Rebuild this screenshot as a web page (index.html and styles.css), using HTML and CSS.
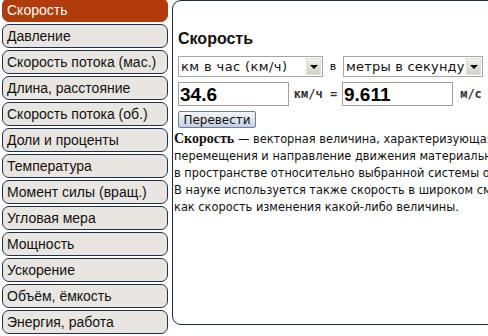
FILE: index.html
```html
<!DOCTYPE html>
<html lang="ru">
<head>
    <meta charset="UTF-8">
    <title>Конвертер величин</title>
    <link rel="stylesheet" href="styles.css">
</head>
<body>
    <div class="page">
        <ul class="menu">
            <li class="menu-item active">Скорость</li>
            <li class="menu-item">Давление</li>
            <li class="menu-item">Скорость потока (мас.)</li>
            <li class="menu-item">Длина, расстояние</li>
            <li class="menu-item">Скорость потока (об.)</li>
            <li class="menu-item">Доли и проценты</li>
            <li class="menu-item">Температура</li>
            <li class="menu-item">Момент силы (вращ.)</li>
            <li class="menu-item">Угловая мера</li>
            <li class="menu-item">Мощность</li>
            <li class="menu-item">Ускорение</li>
            <li class="menu-item">Объём, ёмкость</li>
            <li class="menu-item">Энергия, работа</li>
        </ul>

        <div class="panel">
            <h2 class="panel-title">Скорость</h2>

            <div class="row">
                <div class="select select-from">
                    <select><option>км в час (км/ч)</option></select>
                    <span class="arrow"></span>
                </div>
                <span class="sep">в</span>
                <div class="select select-to">
                    <select><option>метры в секунду</option></select>
                    <span class="arrow"></span>
                </div>
            </div>

            <div class="row">
                <input class="value" type="text" value="34.6">
                <span class="unit">км/ч =</span>
                <input class="value" type="text" value="9.611">
                <span class="unit unit-right">м/с</span>
            </div>

            <button class="convert-btn">Перевести</button>

            <p class="info">
                <b>Скорость</b> — векторная величина, характеризующая быстроту<br>
                перемещения и направление движения материальной точки<br>
                в пространстве относительно выбранной системы отсчёта.<br>
                В науке используется также скорость в широком смысле,<br>
                как скорость изменения какой-либо величины.
            </p>
        </div>
    </div>
</body>
</html>
```

FILE: styles.css
```css
body {
    margin: 0;
    background: #fff;
    font-family: "Liberation Sans", Arial, sans-serif;
    overflow: hidden;
}

.page {
    display: flex;
    align-items: flex-start;
}

.menu {
    list-style: none;
    margin: -2px 0 0 2px;
    padding: 0;
    width: 166px;
    flex-shrink: 0;
}

.menu-item {
    box-sizing: border-box;
    height: 24px;
    margin-bottom: 2px;
    padding: 3px 0 0 4px;
    font-size: 14px;
    color: #111;
    background: #e9e6e1;
    border: 1px solid #1e3150;
    border-radius: 7px;
    white-space: nowrap;
}

.menu-item.active {
    background: #b23b0c;
    border-color: #b23b0c;
    color: #fff;
}

.panel {
    box-sizing: border-box;
    margin-left: 4px;
    width: 600px;
    height: 325px;
    flex-shrink: 0;
    padding: 29px 0 0 5px;
    border: 1.5px solid #1c2a44;
    border-radius: 9px;
}

.panel-title {
    margin: 0 0 8px 0;
    font-size: 16px;
    font-weight: bold;
    color: #111;
}

.row {
    display: flex;
    align-items: center;
    margin-bottom: 5px;
}

.select {
    box-sizing: border-box;
    display: flex;
    align-items: center;
    height: 21px;
    border: 1px solid #a5a5a5;
    background: #fff;
}

.select-from {
    width: 145px;
}

.select-to {
    width: 140px;
}

.select select {
    flex: 1;
    min-width: 0;
    appearance: none;
    border: none;
    background: transparent;
    padding: 0 0 0 2px;
    font-family: "DejaVu Sans", Verdana, sans-serif;
    font-size: 13px;
    letter-spacing: 0.4px;
    color: #111;
}

.select-to select {
    letter-spacing: 0.2px;
}

.arrow {
    position: relative;
    width: 15px;
    height: 17px;
    margin-right: 1px;
    background: linear-gradient(#f2f1ee, #d3d0c8);
    border: 1px solid #e0ded8;
    box-sizing: border-box;
}

.arrow::after {
    content: "";
    position: absolute;
    left: 3px;
    top: 6px;
    border-left: 4px solid transparent;
    border-right: 4px solid transparent;
    border-top: 4px solid #000;
}

.sep {
    width: 20px;
    text-align: center;
    font-family: "DejaVu Sans", Verdana, sans-serif;
    font-size: 11px;
}

.value {
    box-sizing: border-box;
    width: 111px;
    height: 24px;
    padding: 1px 1px 0;
    border: 1px solid #a0a0a0;
    font-family: "Liberation Sans", Arial, sans-serif;
    font-size: 19px;
    font-weight: bold;
    color: #000;
}

.unit {
    width: 53px;
    text-align: center;
    font-family: "DejaVu Sans Mono", monospace;
    font-size: 12px;
    font-weight: bold;
    color: #333;
}

.unit-right {
    width: 36px;
}

.convert-btn {
    display: block;
    width: 78px;
    height: 17px;
    padding: 0;
    margin: 4px 0 0 0;
    font-family: "DejaVu Sans", Verdana, sans-serif;
    font-size: 12px;
    color: #111;
    background: linear-gradient(#f4f6fa, #c4d0e2);
    border: 1px solid #6d7f9a;
    border-radius: 2px;
}

.info {
    margin: 2px 0 0 -4px;
    font-family: "DejaVu Sans", Verdana, sans-serif;
    font-size: 11.4px;
    line-height: 17px;
    color: #111;
    white-space: nowrap;
}

.info b {
    font-family: "Liberation Serif", "Times New Roman", serif;
    font-size: 14px;
}
```
